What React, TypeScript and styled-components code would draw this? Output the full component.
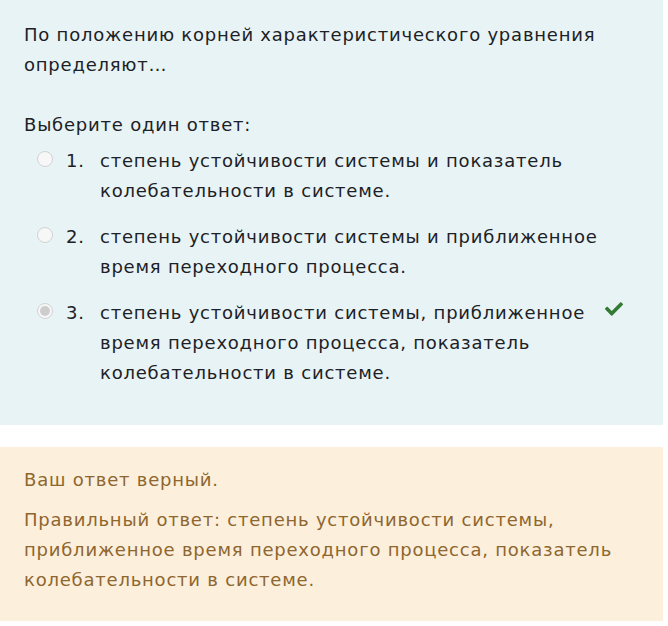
import React from "react";
import styled, { createGlobalStyle } from "styled-components";
import { FaCheck } from "react-icons/fa";

const GlobalStyle = createGlobalStyle`
  body {
    margin: 0;
    background: #ffffff;
    font-family: "DejaVu Sans", "Open Sans", sans-serif;
    font-size: 18px;
    letter-spacing: 0.78px;
    line-height: 30px;
    color: #1d2125;
  }
`;

const Page = styled.div`
  width: 663px;
  display: flex;
  flex-direction: column;
  gap: 22px;
`;

const Formulation = styled.div`
  background: #e7f3f5;
  padding: 20px 24px 37px;
`;

const QuestionText = styled.p`
  margin: 0;
  max-width: 600px;
`;

const Prompt = styled.div`
  margin-top: 30px;
`;

const AnswerList = styled.div`
  margin-top: 6px;
  display: flex;
  flex-direction: column;
  gap: 16px;
`;

const Option = styled.div`
  display: flex;
  align-items: flex-start;
`;

const Radio = styled.span<{ checked?: boolean }>`
  box-sizing: border-box;
  flex: none;
  width: 16px;
  height: 16px;
  margin: 5px 0 0 13px;
  border-radius: 50%;
  border: 1px solid #d2d2d2;
  background: #f7f7f7;
  display: flex;
  align-items: center;
  justify-content: center;
  &::after {
    content: "";
    display: ${(p) => (p.checked ? "block" : "none")};
    width: 10px;
    height: 10px;
    border-radius: 50%;
    background: #cdcdcd;
  }
`;

const Number = styled.span`
  flex: none;
  width: 34px;
  margin-left: 13px;
`;

const Label = styled.div`
  width: 505px;
  flex: none;
`;

const Mark = styled.span`
  flex: none;
  margin-left: 0;
  padding-top: 2px;
  color: #357a32;
  display: flex;
`;

const Outcome = styled.div`
  background: #fcefdc;
  color: #8e662e;
  padding: 18px 24px 26px;
  display: flex;
  flex-direction: column;
  gap: 10px;
`;

const FeedbackText = styled.div`
  max-width: 615px;
`;

const answers = [
  "степень устойчивости системы и показатель колебательности в системе.",
  "степень устойчивости системы и приближенное время переходного процесса.",
  "степень устойчивости системы, приближенное время переходного процесса, показатель колебательности в системе.",
];

export default function App() {
  return (
    <>
      <GlobalStyle />
      <Page>
        <Formulation>
          <QuestionText>
            По положению корней характеристического уравнения определяют…
          </QuestionText>
          <Prompt>Выберите один ответ:</Prompt>
          <AnswerList>
            {answers.map((text, i) => (
              <Option key={i}>
                <Radio checked={i === 2} />
                <Number>{i + 1}.</Number>
                <Label>{text}</Label>
                {i === 2 && (
                  <Mark>
                    <FaCheck size={18} />
                  </Mark>
                )}
              </Option>
            ))}
          </AnswerList>
        </Formulation>
        <Outcome>
          <FeedbackText>Ваш ответ верный.</FeedbackText>
          <FeedbackText>
            Правильный ответ: степень устойчивости системы, приближенное время
            переходного процесса, показатель колебательности в системе.
          </FeedbackText>
        </Outcome>
      </Page>
    </>
  );
}
